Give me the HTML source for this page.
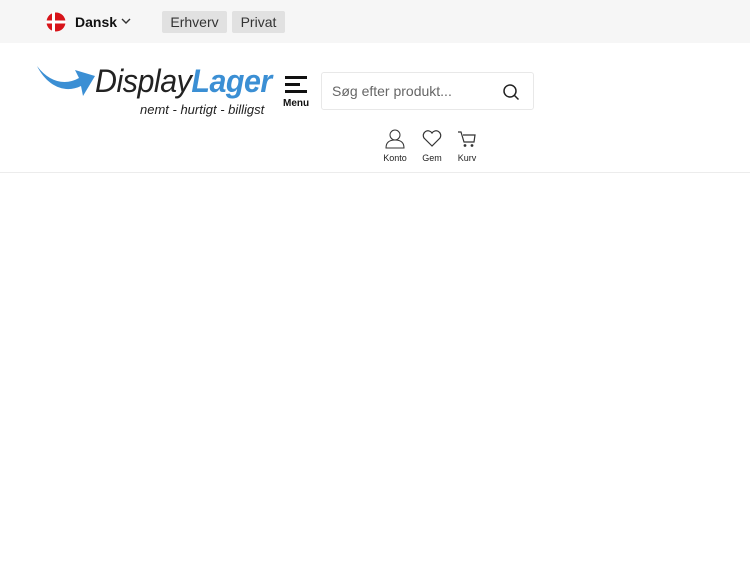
<!DOCTYPE html>
<html><head><meta charset="utf-8"><style>
*{margin:0;padding:0;box-sizing:border-box}
body{width:750px;height:563px;background:#fff;font-family:"Liberation Sans",sans-serif;position:relative;overflow:hidden}
.top{position:absolute;left:0;top:0;width:750px;height:43px;background:#f6f6f6}
.abs{position:absolute}
.btn{position:absolute;top:11px;height:22px;background:#e1e1e1;border-radius:2px;font-size:14px;color:#333;line-height:22px;text-align:center}
.lbl{position:absolute;font-size:9px;color:#222;text-align:center;width:30px}
</style></head><body>
<div class="top"></div>
<svg class="abs" style="left:46px;top:12px" width="20" height="20" viewBox="0 0 20 20"><circle cx="10" cy="10" r="9.5" fill="#d7141a"/><rect x="6" y="0" width="3" height="20" fill="#fff"/><rect x="0" y="8.5" width="20" height="3" fill="#fff"/></svg>
<div class="abs" style="left:75px;top:14px;font-size:14px;font-weight:bold;color:#111">Dansk</div>
<svg class="abs" style="left:121px;top:18px" width="10" height="7"><path d="M1 1l4 4 4-4" stroke="#333" stroke-width="1.4" fill="none"/></svg>
<div class="btn" style="left:162px;width:65px">Erhverv</div>
<div class="btn" style="left:232px;width:53px">Privat</div>
<svg class="abs" style="left:37px;top:64px" width="60" height="34" viewBox="0 0 60 34"><path d="M0 2 C12 18 28 22 42 14 L38 6 L58 12 L46 32 L44 22 C28 30 10 22 0 2Z" fill="#3b8fd4"/></svg>
<div class="abs" style="left:95px;top:63px;font-size:32px;font-style:italic;color:#222;letter-spacing:-0.5px;transform:scaleX(0.95);transform-origin:0 0;white-space:nowrap">Display<span style="color:#3b8fd4;font-weight:bold">Lager</span></div>
<div class="abs" style="left:140px;top:102px;font-size:13px;font-style:italic;color:#222">nemt - hurtigt - billigst</div>
<div class="abs" style="left:285px;top:76px;width:22px;height:2.5px;background:#111"></div>
<div class="abs" style="left:285px;top:83px;width:15px;height:2.5px;background:#111"></div>
<div class="abs" style="left:285px;top:90px;width:22px;height:2.5px;background:#111"></div>
<div class="abs" style="left:283px;top:98px;font-size:10px;font-weight:bold;color:#111">Menu</div>
<div class="abs" style="left:321px;top:72px;width:213px;height:38px;border:1px solid #e8e8e8;border-radius:3px"></div>
<div class="abs" style="left:332px;top:83px;font-size:14px;color:#666">Søg efter produkt...</div>
<svg class="abs" style="left:502px;top:83px" width="18" height="18"><circle cx="8" cy="8" r="6" stroke="#222" stroke-width="1.5" fill="none"/><path d="M12.5 12.5l4 4" stroke="#222" stroke-width="1.5"/></svg>
<svg class="abs" style="left:385px;top:129px" width="20" height="20"><circle cx="10" cy="6" r="5" stroke="#333" fill="none"/><path d="M1 19c0-6 4-8 9-8s9 2 9 8z" stroke="#333" fill="none"/></svg>
<svg class="abs" style="left:422px;top:130px" width="20" height="18"><path d="M10 16L2 8a4.5 4.5 0 018-5a4.5 4.5 0 018 5z" stroke="#333" stroke-width="1.2" fill="none"/></svg>
<svg class="abs" style="left:457px;top:130px" width="20" height="19"><path d="M1 2h3l3 10h10l1-7H6" stroke="#333" stroke-width="1.2" fill="none"/><circle cx="8" cy="15.5" r="1.4" fill="#333"/><circle cx="15" cy="15.5" r="1.4" fill="#333"/></svg>
<div class="lbl" style="left:380px;top:153px">Konto</div>
<div class="lbl" style="left:417px;top:153px">Gem</div>
<div class="lbl" style="left:452px;top:153px">Kurv</div>
<div class="abs" style="left:0;top:172px;width:750px;height:1px;background:#ececec"></div>
</body></html>
